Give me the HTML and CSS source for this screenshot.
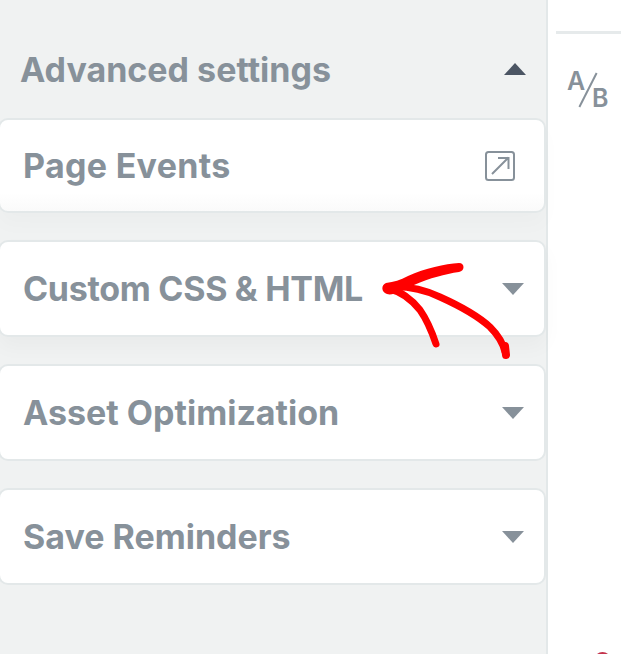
FILE: index.html
```html
<!DOCTYPE html>
<html lang="en">
<head>
    <meta charset="UTF-8">
    <title>Advanced settings</title>
    <link rel="stylesheet" href="styles.css">
</head>
<body>
    <div class="layout">
        <div class="sidebar">
            <div class="section-head">
                <h2>Advanced settings</h2>
                <span class="caret caret-up"></span>
            </div>
            <div class="card card-events">
                <span class="card-title card-title-wide">Page Events</span>
                <svg class="open-icon" width="30" height="30" viewBox="0 0 30 30" fill="none" stroke="#87919a" stroke-width="2">
                    <rect x="1" y="1" width="28" height="28" rx="2.5"/>
                    <path d="M7 23 L23.500 6.500 M13 7 H23.500 V18"/>
                </svg>
            </div>
            <div class="card card-shadow">
                <span class="card-title card-title-tight">Custom CSS &amp; HTML</span>
                <span class="caret"></span>
            </div>
            <div class="card">
                <span class="card-title">Asset Optimization</span>
                <span class="caret"></span>
            </div>
            <div class="card">
                <span class="card-title">Save Reminders</span>
                <span class="caret"></span>
            </div>
        </div>
        <div class="rail">
            <div class="rail-line"></div>
            <div class="ab-icon">
                <span class="ab-a">A</span>
                <span class="ab-b">B</span>
            </div>
        </div>
    </div>

    <!-- hand drawn annotation on top of the screenshot -->
    <svg class="arrow" width="628" height="654" viewBox="0 0 628 654" fill="none" stroke="#ff0000" stroke-linecap="round" stroke-linejoin="round">
        <path fill="#ff0000" stroke="none" d="M459 263 C445 264 425 268 408 276 C400 280 394 282 386 283 C381 285 381 292 387 294 C393 296 402 290 414 285 C430 278 445 274 459 272 C465 271 465 263 459 263 Z"/>
        <path stroke-width="7" d="M390 287 C410 286 425 290 440 297 C460 306 478 316 490 327 C498 335 503 343 505 352"/>
        <path stroke-width="8" d="M505 346 L506 355"/>
        <path stroke-width="7" d="M390 289 C402 292 412 300 420 310 C427 320 432 332 436 344"/>
    </svg>
    <div class="corner-mark"></div>
</body>
</html>
```

FILE: styles.css
```css
html, body {
    margin: 0;
    height: 654px;
    overflow: hidden;
    background: #fff;
}

body {
    font-family: 'Inter', 'Liberation Sans', sans-serif;
    position: relative;
}

.layout {
    display: flex;
    height: 654px;
}

.sidebar {
    width: 546px;
    flex-shrink: 0;
    background: #f0f2f2;
    border-right: 2px solid #e3e8e9;
    box-sizing: content-box;
}

.section-head {
    display: flex;
    align-items: center;
    justify-content: space-between;
    height: 118px;
    padding: 20px 20px 0 20px;
    box-sizing: border-box;
}

.section-head h2 {
    margin: 0;
    font-size: 34px;
    font-weight: 700;
    color: #87919a;
}

.card {
    display: flex;
    align-items: center;
    justify-content: space-between;
    height: 97px;
    width: 548px;
    box-sizing: border-box;
    margin: 0 0 27px -2px;
    padding: 0 20px 0 23px;
    background: #fff;
    border: 2px solid #e3e8e9;
    border-radius: 10px;
}

.card-events {
    height: 95px;
    background: linear-gradient(#fff 80%, #fafafa);
    box-shadow: 0 12px 20px rgba(0, 0, 0, 0.02);
    padding-right: 29px;
}

.card-shadow {
    box-shadow: 0 10px 20px rgba(0, 0, 0, 0.03);
}

.card-title {
    font-size: 34px;
    font-weight: 700;
    color: #87919a;
}

.card-title-tight {
    letter-spacing: -0.3px;
}

.card-title-wide {
    letter-spacing: 0.3px;
}

.caret {
    width: 0;
    height: 0;
    border-left: 11px solid transparent;
    border-right: 11px solid transparent;
    border-top: 12px solid #87919a;
}

.caret-up {
    border-top: 0;
    border-bottom: 12px solid #4b5563;
}

.rail {
    flex: 1;
    padding: 31px 7px 0 8px;
}

.rail-line {
    height: 3px;
    background: #e6eaeb;
}

.ab-icon {
    position: relative;
    margin-top: 38px;
    height: 36px;
    color: #87919a;
    font-size: 25px;
    font-weight: 600;
    line-height: 1;
}

.ab-icon::before {
    content: "";
    position: absolute;
    left: 31px;
    top: -1px;
    width: 2px;
    height: 38px;
    background: #87919a;
    transform: rotate(27deg);
}

.ab-a {
    position: absolute;
    left: 11px;
    top: -3px;
}

.ab-b {
    position: absolute;
    left: 36px;
    top: 14px;
}

.arrow {
    position: absolute;
    left: 0;
    top: 0;
}

.corner-mark {
    position: absolute;
    left: 594px;
    top: 652px;
    width: 17px;
    height: 17px;
    background: #c4344c;
    border-radius: 50%;
}
```
